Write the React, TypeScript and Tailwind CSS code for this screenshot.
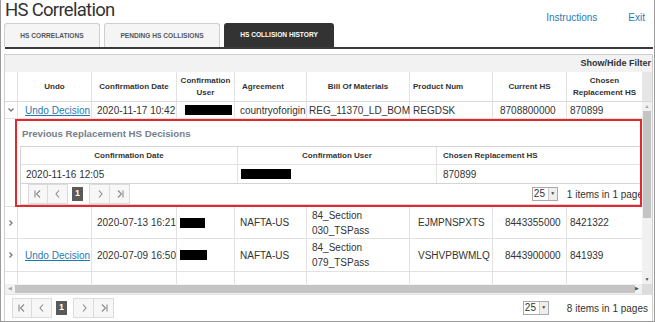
import { ReactNode } from 'react';

const cols = 'grid grid-cols-[13px_74px_85px_58px_72px_103px_83px_74px_75px]';

const Redacted = ({ w, className = '' }: { w: string; className?: string }) => (
  <span className={`inline-block h-[10px] bg-black ${w} ${className}`} />
);

const Chevron = ({ dir }: { dir: 'down' | 'right' }) => (
  <svg width="8" height="8" viewBox="0 0 8 8" className="text-[#777]">
    {dir === 'down' ? (
      <path d="M1.5 2.5 L4 5 L6.5 2.5" fill="none" stroke="currentColor" strokeWidth="1.3" />
    ) : (
      <path d="M2.5 1.5 L5 4 L2.5 6.5" fill="none" stroke="currentColor" strokeWidth="1.3" />
    )}
  </svg>
);

const PagerIcon = ({ kind }: { kind: 'first' | 'prev' | 'next' | 'last' }) => {
  const paths: Record<string, ReactNode> = {
    first: (
      <>
        <path d="M2 1.5 V8.5" />
        <path d="M7 1.5 L3.5 5 L7 8.5" />
      </>
    ),
    prev: <path d="M6 1.5 L3 5 L6 8.5" />,
    next: <path d="M4 1.5 L7 5 L4 8.5" />,
    last: (
      <>
        <path d="M3 1.5 L6.5 5 L3 8.5" />
        <path d="M8 1.5 V8.5" />
      </>
    ),
  };
  return (
    <svg width="10" height="10" viewBox="0 0 10 10" fill="none" stroke="#8a8a8a" strokeWidth="1.1">
      {paths[kind]}
    </svg>
  );
};

const Pager = ({ label, selectClass }: { label: string; selectClass: string }) => (
  <div className="flex items-center justify-between h-full">
    <div className="flex items-center">
      <div className="flex">
        <button className="w-[20px] h-[20px] flex items-center justify-center border border-[#dcdcdc] bg-[#f7f7f7]">
          <PagerIcon kind="first" />
        </button>
        <button className="w-[20px] h-[20px] flex items-center justify-center border border-l-0 border-[#dcdcdc] bg-[#f7f7f7]">
          <PagerIcon kind="prev" />
        </button>
      </div>
      <span className="mx-[4px] w-[11px] h-[14px] bg-[#5a5a5a] text-white text-[9px] font-bold flex items-center justify-center">
        1
      </span>
      <div className="flex ml-[2px]">
        <button className="w-[21px] h-[20px] flex items-center justify-center border border-[#dcdcdc] bg-[#f7f7f7]">
          <PagerIcon kind="next" />
        </button>
        <button className="w-[20px] h-[20px] flex items-center justify-center border border-l-0 border-[#dcdcdc] bg-[#f7f7f7]">
          <PagerIcon kind="last" />
        </button>
      </div>
    </div>
    <div className={`flex items-center ${selectClass}`}>
      <div className="flex h-[14px] border border-[#aaa] bg-white">
        <span className="w-[15px] text-[10px] leading-[12px] pl-[1px] text-[#333]">25</span>
        <span className="w-[9px] border-l border-[#ccc] bg-[#eee] flex items-center justify-center">
          <span className="text-[5px] text-[#444]">▼</span>
        </span>
      </div>
      <span className="text-[10px] text-[#333] whitespace-nowrap">{label}</span>
    </div>
  </div>
);

const Row = ({
  h,
  expanded,
  undo,
  date,
  userW,
  userPad,
  agreement,
  bom,
  bomPad,
  product,
  productPad,
  current,
  currentPad,
  chosen,
}: {
  h: string;
  expanded?: boolean;
  undo?: boolean;
  date: string;
  userW: string;
  userPad: string;
  agreement: string;
  bom: ReactNode;
  bomPad: string;
  product: string;
  productPad: string;
  current: string;
  currentPad: string;
  chosen: string;
}) => {
  const cell = 'border-r border-[#e2e2e2] flex items-center overflow-hidden whitespace-nowrap';
  return (
    <div className={`${cols} ${h} border-b border-[#e2e2e2] text-[10px] text-[#333]`}>
      <div className="border-r border-[#e2e2e2] flex items-center justify-center">
        <Chevron dir={expanded ? 'down' : 'right'} />
      </div>
      <div className={`${cell} pl-[7px]`}>
        {undo && <a className="text-[#1f78b4] underline">Undo Decision</a>}
      </div>
      <div className={`${cell} pl-[5px]`}>{date}</div>
      <div className={`${cell} ${userPad}`}>
        <Redacted w={userW} />
      </div>
      <div className={`${cell} pl-[5px]`}>{agreement}</div>
      <div className={`border-r border-[#e2e2e2] flex items-center whitespace-nowrap leading-[15px] ${bomPad}`}>{bom}</div>
      <div className={`border-r border-[#e2e2e2] flex items-center whitespace-nowrap ${productPad}`}>{product}</div>
      <div className={`${cell} ${currentPad}`}>{current}</div>
      <div className="flex items-center pl-[3px] whitespace-nowrap">{chosen}</div>
    </div>
  );
};

export default function App() {
  return (
    <div className="w-[655px] h-[322px] overflow-hidden bg-white border-l border-r border-b border-[#9a9a9a] font-['Liberation_Sans',Arial,sans-serif] text-[#333] flex flex-col">
      {/* title bar */}
      <div className="flex justify-between items-start h-[23px]">
        <h1 className="pl-[4px] font-['Roboto',Arial,sans-serif] text-[18.5px] tracking-[-0.7px] leading-[21px] text-[#333]">
          HS Correlation
        </h1>
        <div className="flex gap-[31px] pr-[9px] pt-[10px] text-[10px] text-[#2a7ab8]">
          <a>Instructions</a>
          <a>Exit</a>
        </div>
      </div>

      {/* tabs */}
      <div className="flex items-end gap-[4px] pl-[3px] h-[24px]">
        <div className="w-[96px] h-[24px] rounded-t-[3px] border border-b-0 border-[#cfcfcf] bg-[#f5f5f5] flex items-center justify-center text-[6.6px] font-bold text-[#555]">
          HS CORRELATIONS
        </div>
        <div className="w-[116px] h-[24px] rounded-t-[3px] border border-b-0 border-[#cfcfcf] bg-[#f5f5f5] flex items-center justify-center text-[6.6px] font-bold text-[#555]">
          PENDING HS COLLISIONS
        </div>
        <div className="w-[110px] h-[24px] rounded-t-[3px] bg-[#333] flex items-center justify-center text-[6.6px] font-bold text-white">
          HS COLLISION HISTORY
        </div>
      </div>
      <div className="h-[2px] bg-[#3a3a3a] ml-[4px] mr-[1px]" />

      {/* grid panel */}
      <div className="mt-[5px] ml-[3px] w-[649px] flex-1 border-l border-r border-t border-[#cfcfcf] flex flex-col">
        <div className="h-[17px] bg-[#f2f2f2] flex items-center justify-end pr-[1px] text-[9px] font-bold text-[#333]">
          Show/Hide Filter
        </div>

        {/* header */}
        <div className="flex h-[30px] border-b border-[#d8d8d8]">
          <div className={`${cols} text-[8px] font-bold text-[#333] leading-[12px]`}>
            <div className="border-r border-[#e2e2e2]" />
            <div className="border-r border-[#e2e2e2] flex items-center justify-center">Undo</div>
            <div className="border-r border-[#e2e2e2] flex items-center justify-center">Confirmation Date</div>
            <div className="border-r border-[#e2e2e2] flex items-center justify-center text-center">
              Confirmation
              <br />
              User
            </div>
            <div className="border-r border-[#e2e2e2] flex items-center pl-[7px]">Agreement</div>
            <div className="border-r border-[#e2e2e2] flex items-center justify-center">Bill Of Materials</div>
            <div className="border-r border-[#e2e2e2] flex items-center pl-[3px]">Product Num</div>
            <div className="border-r border-[#e2e2e2] flex items-center justify-center">Current HS</div>
            <div className="flex items-center justify-center text-center whitespace-nowrap overflow-hidden">
              Chosen
              <br />
              Replacement HS
            </div>
          </div>
          <div className="w-[10px] bg-[#e6e6e6]" />
        </div>

        {/* body */}
        <div className="flex h-[182px]">
          <div className="w-[637px] overflow-hidden">
            <Row
              h="h-[17px]"
              expanded
              undo
              date="2020-11-17 10:42"
              userW="w-[47px]"
              userPad="pl-[8px]"
              agreement="countryoforigin"
              bom="REG_11370_LD_BOM"
              bomPad="pl-[2px]"
              product="REGDSK"
              productPad="pl-[3px]"
              current="8708800000"
              currentPad="pl-[7px]"
              chosen="870899"
            />

            {/* detail */}
            <div className="h-[88px] pl-[10px] border-b border-[#e2e2e2]">
              <div className="h-[88px] border-2 border-[#e5262d] pl-[3px] flex flex-col">
                <div className="h-[23px] flex items-center pl-[2px] pt-[4px] text-[9.7px] font-bold text-[#75808a]">
                  Previous Replacement HS Decisions
                </div>
                <div className="mt-[2px] border border-r-0 border-[#d4d4d4] flex-1 flex flex-col">
                  <div className="grid grid-cols-[217px_199px_1fr] h-[18px] border-b border-[#e2e2e2] text-[8px] font-bold">
                    <div className="border-r border-[#e2e2e2] flex items-center justify-center">Confirmation Date</div>
                    <div className="border-r border-[#e2e2e2] flex items-center justify-center">Confirmation User</div>
                    <div className="flex items-center pl-[6px]">Chosen Replacement HS</div>
                  </div>
                  <div className="grid grid-cols-[217px_199px_1fr] h-[19px] border-b border-[#d4d4d4] text-[10px]">
                    <div className="border-r border-[#e2e2e2] flex items-center pl-[5px]">2020-11-16 12:05</div>
                    <div className="border-r border-[#e2e2e2] flex items-center pl-[3px]">
                      <Redacted w="w-[50px]" />
                    </div>
                    <div className="flex items-center pl-[6px]">870899</div>
                  </div>
                  <div className="flex-1 pl-[7px] overflow-hidden">
                    <Pager label="1 items in 1 pages" selectClass="gap-[9px] mr-[-8px]" />
                  </div>
                </div>
              </div>
            </div>

            <Row
              h="h-[32px]"
              date="2020-07-13 16:21"
              userW="w-[25px]"
              userPad="pl-[3px]"
              agreement="NAFTA-US"
              bom={
                <span>
                  84_Section
                  <br />
                  030_TSPass
                </span>
              }
              bomPad="pl-[5px]"
              product="EJMPNSPXTS"
              productPad="pl-[8px]"
              current="8443355000"
              currentPad="pl-[12px]"
              chosen="8421322"
            />
            <Row
              h="h-[33px]"
              undo
              date="2020-07-09 16:50"
              userW="w-[27px]"
              userPad="pl-[3px]"
              agreement="NAFTA-US"
              bom={
                <span>
                  84_Section
                  <br />
                  079_TSPass
                </span>
              }
              bomPad="pl-[5px]"
              product="VSHVPBWMLQ"
              productPad="pl-[8px]"
              current="8443900000"
              currentPad="pl-[12px]"
              chosen="841939"
            />
            <div className={`${cols} h-[20px] text-[10px]`}>
              <div className="border-r border-[#e2e2e2]" />
              <div className="border-r border-[#e2e2e2]" />
              <div className="border-r border-[#e2e2e2]" />
              <div className="border-r border-[#e2e2e2]" />
              <div className="border-r border-[#e2e2e2]" />
              <div className="border-r border-[#e2e2e2] pl-[5px] pt-[9px] leading-[15px]">84_Section</div>
              <div className="border-r border-[#e2e2e2]" />
              <div className="border-r border-[#e2e2e2]" />
              <div />
            </div>
          </div>
          {/* vertical scrollbar */}
          <div className="w-[10px] bg-[#f1f1f1] flex flex-col items-center">
            <span className="h-[9px] text-[5px] text-[#a3a3a3] leading-[9px]">▲</span>
            <div className="w-[8px] h-[107px] bg-[#c4c4c4]" />
            <div className="flex-1" />
            <span className="h-[9px] text-[5px] text-[#505050] leading-[9px]">▼</span>
          </div>
        </div>

        {/* horizontal scrollbar */}
        <div className="flex h-[10px] bg-[#f1f1f1] items-center">
          <span className="w-[10px] text-[5px] text-[#a3a3a3] text-center">◀</span>
          <div className="w-[620px] h-[8px] bg-[#c4c4c4]" />
          <span className="w-[10px] text-[5px] text-[#505050] text-center ml-[-3px]">▶</span>
          <div className="flex-1 bg-[#dcdcdc] h-full" />
        </div>

        {/* pager */}
        <div className="flex-1 pl-[7px] pr-[4px] border-t border-[#e2e2e2]">
          <Pager label="8 items in 1 pages" selectClass="gap-[18px]" />
        </div>
      </div>
    </div>
  );
}
